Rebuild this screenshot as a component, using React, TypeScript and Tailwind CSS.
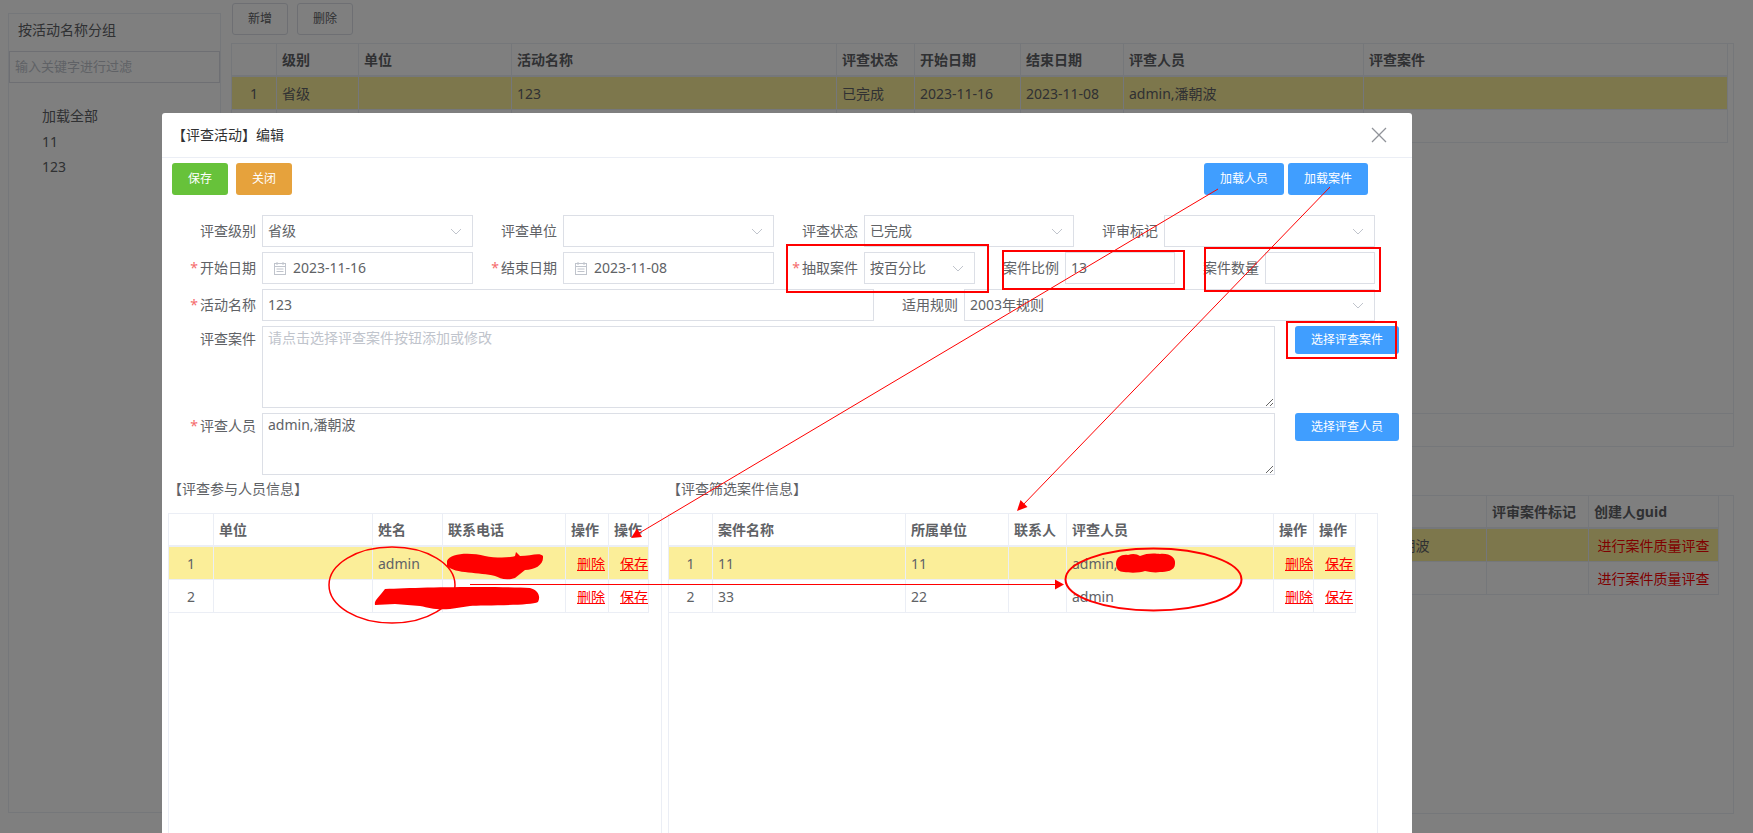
import type { ReactNode } from "react"

const font = "font-['Noto_Sans','Noto_Sans_CJK_SC',sans-serif]"

function Chevron() {
  return (
    <svg width="12" height="7" viewBox="0 0 12 7" fill="none" className="shrink-0">
      <path d="M1 1l5 5 5-5" stroke="#c0c4cc" strokeWidth="1" />
    </svg>
  )
}

function CalendarIcon() {
  return (
    <svg width="12" height="13" viewBox="0 0 12 13" fill="none" className="shrink-0">
      <rect x="0.5" y="1.5" width="11" height="11" stroke="#c0c4cc" />
      <path d="M0.5 4.5h11M3 0v3M9 0v3M2.5 7h7M2.5 9.5h7" stroke="#c0c4cc" />
    </svg>
  )
}

function Label({ text, required, className = "w-[90px]" }: { text: string; required?: boolean; className?: string }) {
  return (
    <div className={`${className} shrink-0 pb-[1px] pr-[6px] text-right text-[14px] text-[#606266] whitespace-nowrap`}>
      {required && <span className="mr-[2px] text-[#f56c6c]">*</span>}
      {text}
    </div>
  )
}

function Control({ value, kind, width }: { value?: string; kind?: "select" | "date"; width: string }) {
  return (
    <div className={`${width} h-[32px] shrink-0 border border-[#dcdfe6] bg-white flex items-center px-[5px] text-[14px] text-[#606266]`}>
      {kind === "date" && (
        <span className="ml-[6px] mr-[7px] flex">
          <CalendarIcon />
        </span>
      )}
      <span className="flex-1 pb-[2px] whitespace-nowrap">{value}</span>
      {kind === "select" && (
        <span className="mr-[5px] flex">
          <Chevron />
        </span>
      )}
    </div>
  )
}

function Btn({ text, className }: { text: string; className: string }) {
  return <button className={`${className} shrink-0 rounded-[3px] text-[12px] text-white`}>{text}</button>
}

function Grid({
  cols,
  head,
  rows,
  selected = 0,
}: {
  cols: number[]
  head: string[]
  rows: ReactNode[][]
  selected?: number
}) {
  return (
    <table className="border-separate border-spacing-0 table-fixed" style={{ width: cols.reduce((a, b) => a + b, 0) }}>
      <colgroup>
        {cols.map((w, i) => (
          <col key={i} style={{ width: w }} />
        ))}
      </colgroup>
      <thead>
        <tr>
          {head.map((h, i) => (
            <th
              key={i}
              className="h-[33px] border-r border-b-2 border-[#ebeef5] px-[5px] text-left text-[14px] font-bold text-[#606266] whitespace-nowrap overflow-hidden"
            >
              {h}
            </th>
          ))}
        </tr>
      </thead>
      <tbody>
        {rows.map((row, r) => (
          <tr key={r} className={r === selected ? "bg-[#fbee99]" : ""}>
            {row.map((c, i) => (
              <td
                key={i}
                className={`h-[33px] border-r border-b border-[#ebeef5] text-[14px] text-[#606266] whitespace-nowrap overflow-hidden ${
                  i === 0 ? "text-center" : "px-[5px]"
                }`}
              >
                {c}
              </td>
            ))}
          </tr>
        ))}
      </tbody>
    </table>
  )
}

function OpLink({ text }: { text: string }) {
  return <a className="ml-[6px] text-[#ff0000] underline">{text}</a>
}

function Background() {
  return (
    <div className="flex h-full">
      <div className="ml-[8px] mt-[13px] h-[800px] w-[213px] border border-[#ebeef5]">
        <div className="h-[37px] pl-[9px] pt-[5px] text-[14px] text-[#606266]">按活动名称分组</div>
        <div className="flex h-[32px] items-center border border-[#dcdfe6] px-[5px] text-[13px] text-[#c0c4cc]">
          输入关键字进行过滤
        </div>
        <div className="mt-[20px] pl-[33px] text-[14px] leading-[25.5px] text-[#606266]">
          <div>加载全部</div>
          <div>11</div>
          <div>123</div>
        </div>
      </div>
      <div className="ml-[10px] w-[1503px]">
        <div className="mt-[3px] flex gap-[9px] pl-[1px]">
          <button className="h-[32px] w-[56px] rounded-[3px] border border-[#dcdfe6] text-[12px] text-[#606266]">新增</button>
          <button className="h-[32px] w-[56px] rounded-[3px] border border-[#dcdfe6] text-[12px] text-[#606266]">删除</button>
        </div>
        <div className="mt-[8px] flex h-[404px] flex-col border border-[#ebeef5]">
          <div className="flex-1 border-b border-[#ebeef5]">
            <Grid
              cols={[45, 82, 153, 325, 78, 106, 103, 240, 364]}
              head={["", "级别", "单位", "活动名称", "评查状态", "开始日期", "结束日期", "评查人员", "评查案件"]}
              rows={[
                ["1", "省级", "", "123", "已完成", "2023-11-16", "2023-11-08", "admin,潘朝波", ""],
                ["", "", "", "", "", "", "", "", ""],
              ]}
            />
          </div>
          <div className="h-[32px]" />
        </div>
        <div className="mt-[48px] h-[319px] border border-[#ebeef5]">
          <Grid
            cols={[45, 1060, 150, 102, 130]}
            head={["", "", "", "评审案件标记", "创建人guid"]}
            rows={[
              ["", "", "admin,潘朝波", "", <span className="block text-center text-[#ff0000]">进行案件质量评查</span>],
              ["", "", "", "", <span className="block text-center text-[#ff0000]">进行案件质量评查</span>],
            ]}
          />
        </div>
      </div>
    </div>
  )
}

function Dialog() {
  return (
    <div className="absolute left-[162px] top-[113px] h-[720px] w-[1250px] rounded-t-[3px] bg-white">
      <div className="flex h-[45px] items-center justify-between border-b border-[#ebeef5] pl-[10px] pr-[25px]">
        <span className="pb-[2px] text-[14px] text-[#303133]">【评查活动】编辑</span>
        <svg width="16" height="16" viewBox="0 0 16 16" fill="none">
          <path d="M1 1l14 14M15 1L1 15" stroke="#909399" strokeWidth="1.3" />
        </svg>
      </div>

      <div className="mt-[5px] flex justify-between pl-[10px] pr-[44px]">
        <div className="flex gap-[8px]">
          <Btn text="保存" className="h-[32px] w-[56px] bg-[#67c23a]" />
          <Btn text="关闭" className="h-[32px] w-[56px] bg-[#e6a23c]" />
        </div>
        <div className="flex gap-[4px]">
          <Btn text="加载人员" className="h-[32px] w-[80px] bg-[#409eff]" />
          <Btn text="加载案件" className="h-[32px] w-[80px] bg-[#409eff]" />
        </div>
      </div>

      <div className="mt-[20px] flex flex-col gap-[5px] pl-[10px]">
        <div className="flex items-center">
          <Label text="评查级别" />
          <Control value="省级" kind="select" width="w-[211px]" />
          <Label text="评查单位" />
          <Control kind="select" width="w-[211px]" />
          <Label text="评查状态" />
          <Control value="已完成" kind="select" width="w-[210px]" />
          <Label text="评审标记" />
          <Control kind="select" width="w-[211px]" />
        </div>
        <div className="flex items-center">
          <Label text="开始日期" required />
          <Control value="2023-11-16" kind="date" width="w-[211px]" />
          <Label text="结束日期" required />
          <Control value="2023-11-08" kind="date" width="w-[211px]" />
          <Label text="抽取案件" required />
          <Control value="按百分比" kind="select" width="w-[111px]" />
          <Label text="案件比例" />
          <Control value="13" width="w-[110px]" />
          <Label text="案件数量" />
          <Control width="w-[110px]" />
        </div>
        <div className="flex items-center">
          <Label text="活动名称" required />
          <Control value="123" width="w-[612px]" />
          <Label text="适用规则" />
          <Control value="2003年规则" kind="select" width="w-[411px]" />
        </div>
        <div className="flex items-start">
          <Label text="评查案件" className="w-[90px] pt-[2px]" />
          <textarea
            readOnly
            placeholder="请点击选择评查案件按钮添加或修改"
            className="block h-[82px] w-[1013px] shrink-0 resize-y border border-[#dcdfe6] px-[5px] pt-[1px] text-[14px] leading-[20px] text-[#606266] outline-none placeholder:text-[#c0c4cc]"
          />
          <Btn text="选择评查案件" className="ml-[20px] h-[28px] w-[104px] bg-[#409eff]" />
        </div>
        <div className="flex items-start">
          <Label text="评查人员" required className="w-[90px] pt-[2px]" />
          <textarea
            readOnly
            defaultValue="admin,潘朝波"
            className="block h-[62px] w-[1013px] shrink-0 resize-y border border-[#dcdfe6] px-[5px] pt-[1px] text-[14px] leading-[20px] text-[#606266] outline-none"
          />
          <Btn text="选择评查人员" className="ml-[20px] h-[28px] w-[104px] bg-[#409eff]" />
        </div>
      </div>

      <div className="mt-[2px] flex h-[22px] items-center text-[14px] text-[#606266]">
        <span className="w-[505px] pl-[6px]">【评查参与人员信息】</span>
        <span>【评查筛选案件信息】</span>
      </div>

      <div className="mt-[14px] flex gap-[6px] pl-[6px]">
        <div className="h-[400px] w-[494px] shrink-0 border border-b-0 border-[#ebeef5]">
          <Grid
            cols={[45, 159, 70, 123, 43, 40]}
            head={["", "单位", "姓名", "联系电话", "操作", "操作"]}
            rows={[
              ["1", "", "admin", "", <OpLink text="删除" />, <OpLink text="保存" />],
              ["2", "", "", "", <OpLink text="删除" />, <OpLink text="保存" />],
            ]}
          />
        </div>
        <div className="h-[400px] w-[710px] shrink-0 border border-b-0 border-[#ebeef5]">
          <Grid
            cols={[44, 193, 103, 58, 207, 40, 42]}
            head={["", "案件名称", "所属单位", "联系人", "评查人员", "操作", "操作"]}
            rows={[
              ["1", "11", "11", "", "admin,潘朝波", <OpLink text="删除" />, <OpLink text="保存" />],
              ["2", "33", "22", "", "admin", <OpLink text="删除" />, <OpLink text="保存" />],
            ]}
          />
        </div>
      </div>
    </div>
  )
}

// red pen marks someone drew on top of the screenshot
function Annotations() {
  return (
    <svg className="pointer-events-none absolute inset-0" width="1753" height="833" fill="none">
      <g stroke="#ff0000" strokeWidth="2">
        <rect x="787" y="245" width="201" height="47" />
        <rect x="1003" y="251" width="181" height="38" />
        <rect x="1205" y="248" width="175" height="43" />
        <rect x="1287" y="322" width="109" height="36" />
      </g>
      <g stroke="#ff0000" strokeWidth="1">
        <path d="M1218 189L636 535" />
        <path d="M1330 187L1021 507" />
        <path d="M470 584.5H1056" />
      </g>
      <g fill="#ff0000">
        <path d="M631 538L642 537L637 528.5Z" />
        <path d="M1017 511L1027.5 507L1020.5 500Z" />
        <path d="M1064 584.5L1055 579.5V589.5Z" />
        <path d="M447 561C450 553 470 552 485 556C495 558 510 558 515 556L516 552L520 556C530 556 540 552 543 556C544 565 535 570 525 570L515 578C505 581 500 578 495 576C480 572 455 574 447 566Z" />
        <path d="M381 594L385 589C420 587 500 586 530 588C538 590 541 596 538 602C530 606 480 605 470 606L450 609C435 610 430 608 420 606L395 604L375 605C374 601 378 598 381 594Z" />
        <path d="M1116 564C1116 557 1122 554 1128 555C1133 553 1137 554 1140 556C1146 553 1155 553 1160 554C1170 553 1176 558 1175 564C1175 571 1166 572 1160 572C1155 573 1150 572 1145 571C1140 573 1130 573 1124 572C1119 572 1116 569 1116 564Z" />
      </g>
      <ellipse cx="392" cy="585" rx="63" ry="38" stroke="#ff0000" strokeWidth="1.5" />
      <ellipse cx="1153.5" cy="579.5" rx="88" ry="31" stroke="#ff0000" strokeWidth="2" />
    </svg>
  )
}

export default function App() {
  return (
    <div className={`relative h-[833px] w-[1753px] overflow-hidden bg-white ${font}`}>
      <Background />
      <div className="absolute inset-0 bg-black/50" />
      <Dialog />
      <Annotations />
    </div>
  )
}
